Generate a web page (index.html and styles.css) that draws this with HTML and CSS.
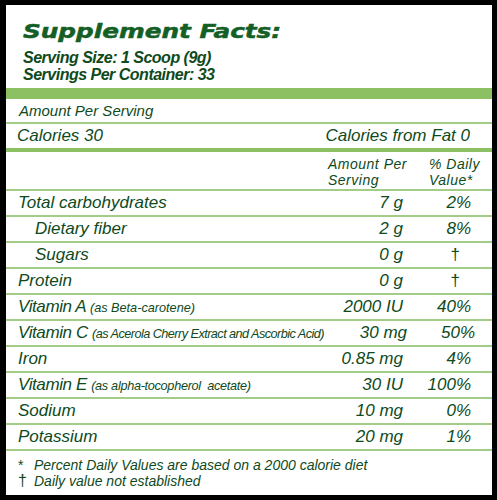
FILE: index.html
```html
<!DOCTYPE html>
<html lang="en">
<head>
<meta charset="utf-8">
<title>Supplement Facts</title>
<link rel="stylesheet" href="styles.css">
</head>
<body>
<div class="label">
  <header class="head">
    <h1 class="title"><span>Supplement Facts:</span></h1>
    <p class="serving first">Serving Size: 1 Scoop (9g)</p>
    <p class="serving">Servings Per Container: 33</p>
  </header>
  <div class="bar-thick"></div>
  <div class="aps">Amount Per Serving</div>
  <div class="cal"><span>Calories 30</span><span>Calories from Fat 0</span></div>
  <div class="bar-mid"></div>
  <div class="grid colhead">
    <span></span>
    <span class="h-amt">Amount Per<br>Serving</span>
    <span class="h-dv">% Daily<br>Value*</span>
  </div>
  <div class="grid row"><span class="name">Total carbohydrates</span><span class="amt">7 g</span><span class="dv">2%</span></div>
  <div class="grid row"><span class="name sub">Dietary fiber</span><span class="amt">2 g</span><span class="dv">8%</span></div>
  <div class="grid row"><span class="name sub">Sugars</span><span class="amt">0 g</span><span class="dv dag">†</span></div>
  <div class="grid row"><span class="name">Protein</span><span class="amt">0 g</span><span class="dv dag">†</span></div>
  <div class="grid row"><span class="name vit">Vitamin A <small class="note">(as Beta-carotene)</small></span><span class="amt">2000 IU</span><span class="dv">40%</span></div>
  <div class="grid row"><span class="name vit">Vitamin C <small class="note tight">(as Acerola Cherry Extract and Ascorbic Acid)</small></span><span class="amt">30 mg</span><span class="dv">50%</span></div>
  <div class="grid row"><span class="name">Iron</span><span class="amt">0.85 mg</span><span class="dv">4%</span></div>
  <div class="grid row"><span class="name vit">Vitamin E <small class="note semi">(as alpha-tocopherol&nbsp; acetate)</small></span><span class="amt">30 IU</span><span class="dv">100%</span></div>
  <div class="grid row"><span class="name">Sodium</span><span class="amt">10 mg</span><span class="dv">0%</span></div>
  <div class="grid row"><span class="name">Potassium</span><span class="amt">20 mg</span><span class="dv">1%</span></div>
  <div class="foot">
    <span class="sym">*</span><span>Percent Daily Values are based on a 2000 calorie diet</span>
    <span class="sym dagger">†</span><span>Daily value not established</span>
  </div>
</div>
</body>
</html>
```

FILE: styles.css
```css
* { box-sizing: border-box; margin: 0; padding: 0; }
html, body { width: 497px; height: 500px; background: #000; overflow: hidden; }
body {
  font-family: "Liberation Sans", Arial, sans-serif;
  font-style: italic;
  color: #0e4a1c;
}
.label {
  width: 497px;
  height: 500px;
  background: #fff;
  border-style: solid;
  border-color: #000;
  border-width: 5px 5px 5px 6px;
  display: flex;
  flex-direction: column;
}
.head { height: 83px; padding: 15px 0 0 17px; flex: none; }
.title {
  font: italic bold 19px/23px "DejaVu Sans", sans-serif;
  color: #145f26;
  -webkit-text-stroke: 0.5px #145f26;
}
.title span { display: inline-block; transform: scaleX(1.3); transform-origin: left center; }
.serving { font-size: 16px; line-height: 17px; font-weight: bold; letter-spacing: -0.5px; }
.serving.first { margin-top: 6px; }
.bar-thick { height: 11px; background: #8cc063; flex: none; }
.bar-mid { height: 4px; background: #8cc063; flex: none; }
.aps {
  height: 25px;
  font-size: 15px;
  line-height: 23px;
  padding-left: 13px;
  border-bottom: 2px solid #a3cc86;
  flex: none;
}
.cal {
  height: 24px;
  font-size: 17px;
  line-height: 24px;
  padding: 0 22px 0 11px;
  display: flex;
  justify-content: space-between;
  flex: none;
}
.grid {
  display: grid;
  grid-template-columns: 1fr 83px 68px;
  padding: 0 21px 0 12px;
  border-bottom: 2px solid #a3cc86;
  flex: none;
}
.colhead {
  height: 39px;
  font-size: 14px;
  line-height: 16px;
  letter-spacing: 0.5px;
  padding-top: 4px;
  white-space: nowrap;
}
.h-amt { padding-left: 8px; }
.h-dv { padding-left: 26px; }
.row { height: 26px; font-size: 17px; line-height: 24px; }
.name { white-space: nowrap; }
.name.sub { padding-left: 17px; }
.vit { letter-spacing: -0.4px; }
.note { font-size: 12.7px; letter-spacing: 0; }
.note.tight { letter-spacing: -0.55px; }
.note.semi { letter-spacing: -0.3px; }
.amt { text-align: right; white-space: nowrap; }
.dv { text-align: right; }
.dv.dag { font-style: normal; padding-right: 11px; }
.foot {
  flex: 1;
  display: grid;
  grid-template-columns: 16px 1fr;
  align-content: start;
  padding: 6px 0 0 12px;
  font-size: 14px;
  line-height: 16px;
}
.sym { font-style: normal; }
.dagger { font-size: 16px; line-height: 16px; }
```
